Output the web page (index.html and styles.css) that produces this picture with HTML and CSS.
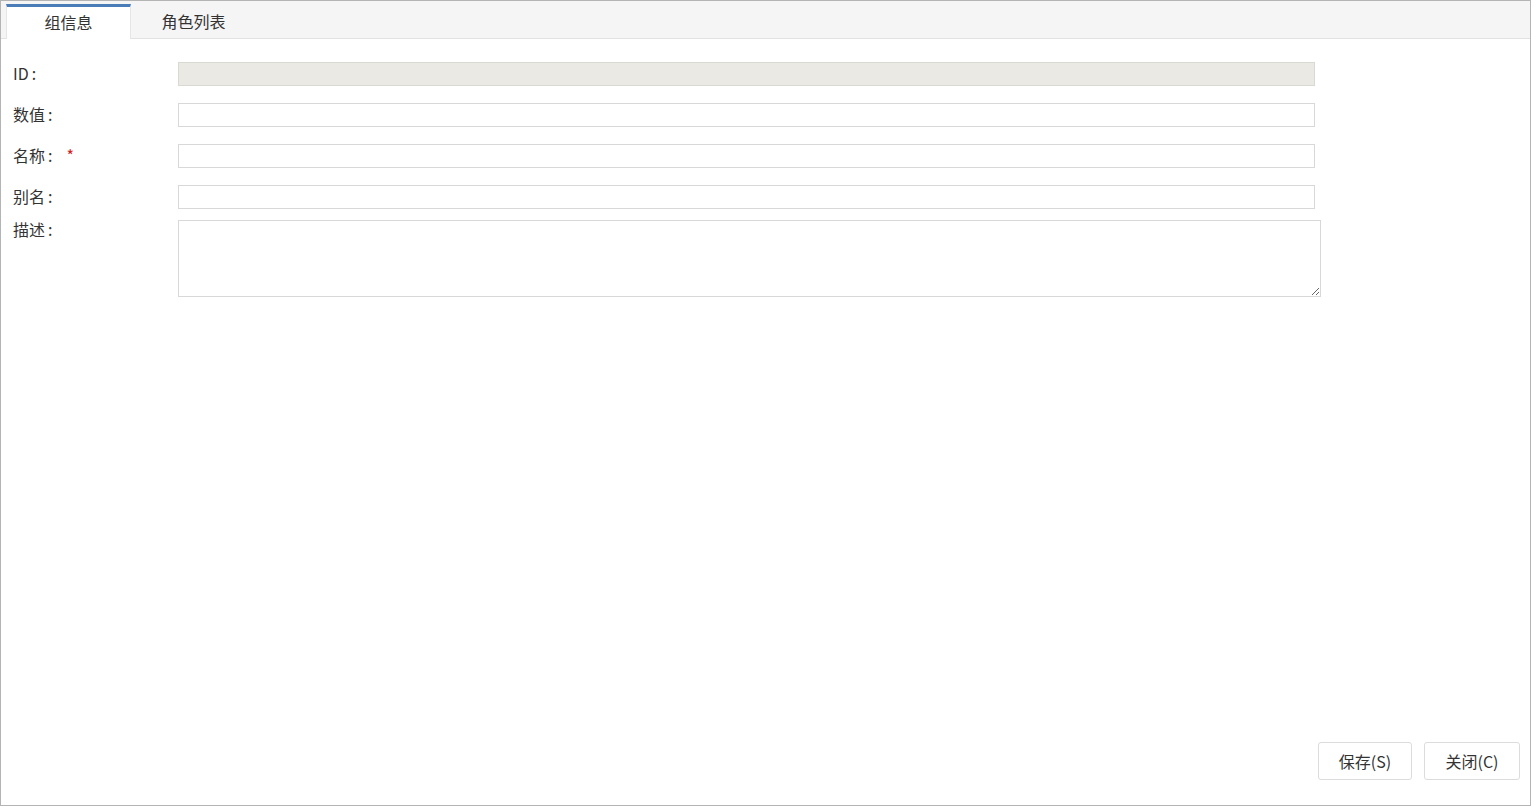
FILE: index.html
```html
<!DOCTYPE html>
<html lang="zh-CN">
<head>
<meta charset="utf-8">
<title>组信息</title>
<link rel="stylesheet" href="styles.css">
</head>
<body>
<div class="page">
  <div class="tabbar">
    <div class="tab active">组信息</div>
    <div class="tab">角色列表</div>
  </div>
  <div class="content">
    <form class="form">
      <div class="row">
        <label class="label">ID<span class="colon">:</span></label>
        <input class="field disabled" type="text" disabled>
      </div>
      <div class="row">
        <label class="label">数值<span class="colon">:</span></label>
        <input class="field" type="text">
      </div>
      <div class="row">
        <label class="label">名称<span class="colon">:</span><span class="req">*</span></label>
        <input class="field" type="text">
      </div>
      <div class="row row-tight">
        <label class="label">别名<span class="colon">:</span></label>
        <input class="field" type="text">
      </div>
      <div class="row row-top">
        <label class="label label-top">描述<span class="colon">:</span></label>
        <textarea class="area"></textarea>
      </div>
    </form>
  </div>
  <div class="footer">
    <button class="btn btn-save" type="button">保存(S)</button>
    <button class="btn btn-close" type="button">关闭(C)</button>
  </div>
</div>
</body>
</html>
```
FILE: styles.css
```css
* { box-sizing: border-box; }
html, body { margin: 0; padding: 0; background: #fff; }
body {
  font-family: "Noto Sans CJK SC", "Noto Sans", "Liberation Sans", sans-serif;
  font-size: 16px;
  color: #333;
}
.page {
  width: 1531px;
  height: 806px;
  border: 1px solid #b4b4b4;
  display: flex;
  flex-direction: column;
}
.tabbar {
  height: 38px;
  background: #f5f5f5;
  border-bottom: 1px solid #e2e2e2;
  display: flex;
  align-items: flex-end;
  padding-left: 5px;
}
.tab {
  width: 125px;
  height: 34px;
  margin-bottom: -1px;
  display: flex;
  align-items: center;
  justify-content: center;
  font-size: 16px;
  color: #333;
  padding-bottom: 3px;
}
.tab.active {
  background: #fff;
  border-top: 3px solid #4a7db8;
  border-left: 1px solid #e6e6e6;
  border-right: 1px solid #e6e6e6;
  height: 35px;
  padding-bottom: 3px;
}
.content {
  flex: 1;
  padding: 23px 0 0 12px;
}
.form {
  display: flex;
  flex-direction: column;
}
.row {
  display: flex;
  align-items: center;
  margin-bottom: 17px;
}
.row-tight { margin-bottom: 11px; }
.row-top { align-items: flex-start; }
.label {
  width: 165px;
  height: 24px;
  flex: none;
  line-height: 22px;
  white-space: pre;
}
.label-top {
  line-height: 18px;
}
.colon {
  margin-left: 3px;
}
.req {
  color: #d0201c;
  margin-left: 14px;
}
.field {
  width: 1137px;
  height: 24px;
  border: 1px solid #d8d8d8;
  background: #fff;
  padding: 0 4px;
  font: inherit;
  outline: none;
}
.field.disabled {
  background: #eae9e3;
  border-color: #d9d9d4;
}
.area {
  width: 1143px;
  height: 77px;
  border: 1px solid #d8d8d8;
  resize: both;
  font: inherit;
  outline: none;
  margin: 0;
}
.footer {
  display: flex;
  justify-content: flex-end;
  gap: 12px;
  padding: 0 10px 25px 0;
}
.btn {
  height: 38px;
  border: 1px solid #dcdcdc;
  border-radius: 3px;
  background: #fff;
  font: inherit;
  font-size: 16px;
  color: #333;
  padding: 0;
}
.btn-save { width: 94px; }
.btn-close { width: 96px; }
```
